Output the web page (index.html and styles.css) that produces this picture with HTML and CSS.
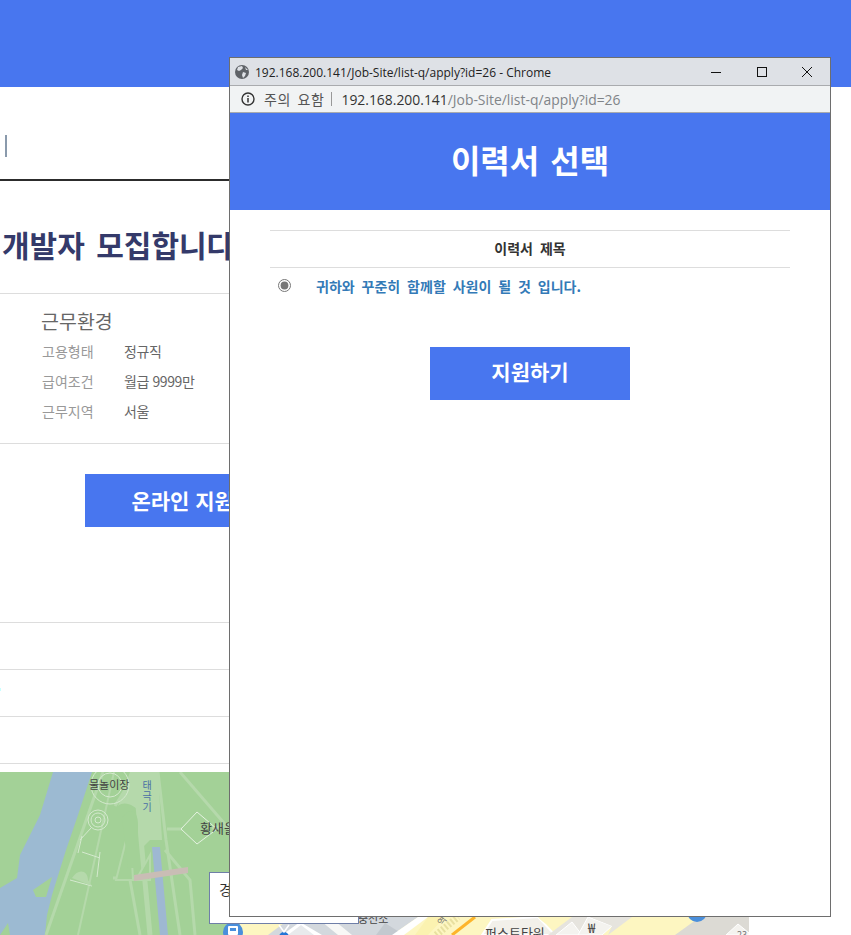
FILE: index.html
```html
<!DOCTYPE html>
<html lang="ko">
<head>
  <meta charset="UTF-8">
  <title>이력서 선택</title>
  <link rel="stylesheet" href="styles.css">
</head>
<body>
  <div class="page">
    <div class="top"></div>
    <div class="content">
      <div class="search"><span class="caret"></span></div>
      <h1 class="job-title">개발자 모집합니다</h1>
      <div class="info">
        <h2 class="info-title">근무환경</h2>
        <dl class="info-list">
          <dt>고용형태</dt><dd>정규직</dd>
          <dt>급여조건</dt><dd>월급 9999만</dd>
          <dt>근무지역</dt><dd>서울</dd>
        </dl>
      </div>
      <div class="apply"><a class="apply-btn">온라인 지원하기</a></div>
      <div class="row"></div>
      <div class="row"><span class="speck"></span></div>
      <div class="row"></div>
      <div class="map">
        <svg width="749" height="163" viewBox="0 772 749 163">
          <rect x="0" y="772" width="240" height="163" fill="#a3d197"/>
          <!-- 강 -->
          <path d="M53 772H92L78 815L66 850L52 895L47 915L45 935H0V888L17 878L20 855L40 815Z" fill="#9cbad2"/>
          <path d="M33 890L52 877L46 897L36 897Z" fill="#a3d197"/>
          <path d="M0 935L8 923L10 935Z" fill="#a3d197"/>
          <!-- 공원 길 -->
          <g fill="none" stroke="#b5d9ab" stroke-width="3">
            <path d="M103 772L46 935"/>
            <path d="M114 772L78 935" stroke-width="2"/>
            <path d="M135 772L142 850L150 935" stroke-width="5"/>
            <path d="M158 772L166 840L180 935" stroke-width="3"/>
            <path d="M180 772L230 830"/>
            <path d="M167 829L182 829M212 828L232 825"/>
            <path d="M115 806L125 790"/>
            <path d="M113 878H150"/>
            <path d="M130 880L140 935"/>
            <path d="M165 850L190 880L195 935"/>
          </g>
          <path d="M116 880L130 825L133 880Z M136 880L150 855V880Z" fill="#a3d197" stroke="#b5d9ab" stroke-width="2"/>
          <path d="M118 806C125 800 135 806 140 812V850L150 840L162 840L158 772H130Z" fill="#b5d9ab"/>
          <path d="M122 818C130 806 138 810 138 825V868H128Z" fill="#a3d197"/>
          <path d="M152 847H160L168 935H160Z" fill="#9eb8d2"/>
          <path d="M134 875L188 867V873L134 881Z" fill="#c9bdb5"/>
          <g fill="none" stroke="#d4e9ce" stroke-width="1">
            <circle cx="98" cy="820" r="10"/>
            <circle cx="98" cy="820" r="7"/>
            <circle cx="98" cy="820" r="3"/>
            <circle cx="110" cy="785" r="12"/>
            <circle cx="110" cy="785" r="19"/>
            <path d="M91 828L80 840M82 836L78 853M70 880L92 886M100 852L97 877M82 852L100 858"/>
            <path d="M197 812L217 829L197 844L181 829Z" stroke="#e5f2e1"/>
          </g>
          <path d="M72 878C78 868 88 870 88 880L92 886Z" fill="#b5d9ab"/>
          <text class="map-label" x="89" y="789">물놀이장</text>
          <text class="map-label map-label-blue" x="147" y="780">태극기</text>
          <text class="map-label map-label-big" x="200" y="833">황새울</text>

          <!-- 팝업 아래로 보이는 지도 -->
          <rect x="240" y="905" width="509" height="30" fill="#fdf6c1"/>
          <path d="M268 935L292 917H418L392 935Z" fill="#d3d8dd"/>
          <path d="M282 935L300 922L322 935Z" fill="#fff"/>
          <path d="M288 935L301 925L314 935Z" fill="#e8eaec"/>
          <path d="M330 917L352 935H338L316 917Z" fill="#f8f8f6"/>
          <path d="M385 923L404 935H376Z" fill="#c3c9cf"/>
          <path d="M392 935L418 917H428L404 935Z" fill="#fff"/>
          <path d="M428 917L415 935H428L445 917Z" fill="#fbf2b0"/>
          <path d="M436 935L458 917" stroke="#e8e0a0" stroke-width="7" stroke-dasharray="2 2" fill="none"/>
          <path d="M452 935L475 917" stroke="#fdb52a" stroke-width="3" fill="none"/>
          <path d="M482 935L492 920L538 917L555 935Z" fill="#f2f0ea" stroke="#fff" stroke-width="2"/>
          <path d="M538 917C545 925 552 927 560 925L566 917Z" fill="#fdf6c1"/>
          <path d="M548 935L572 917H600L612 926L602 935Z" fill="#e6e4de"/>
          <path d="M556 935L572 922L582 935Z" fill="#f4f3ef" stroke="#fff"/>
          <path d="M578 935L588 917L612 926L602 935Z" fill="#f4f3ef" stroke="#fff"/>
          <path d="M608 935L632 917H590L612 926Z" fill="#e6e4de"/>
          <path d="M675 935L700 917H749V935Z" fill="#dcdad4"/>
          <path d="M726 935L738 924L749 933V935Z" fill="#f4f3ef" stroke="#fff"/>
          <circle cx="697" cy="912" r="10" fill="#4a8fdc"/>
          <circle cx="233" cy="932" r="10" fill="#4a8fdc"/>
          <rect x="228" y="926" width="10" height="9" rx="1" fill="#fff"/>
          <rect x="230" y="928" width="6" height="3" fill="#4a8fdc"/>
          <circle cx="284" cy="937" r="5" fill="#2376d6"/>
          <path d="M279 925L284 932L289 925" fill="none" stroke="#fff" stroke-width="1.5"/>
          <text class="map-label" x="358" y="923">충전소</text>
          <text class="map-label map-label-num" x="442" y="926" transform="rotate(-52 442 926)">역</text>
          <text class="map-label map-label-big" x="485" y="938">퍼스트타워</text>
          <text class="map-label map-label-big" x="588" y="933">₩</text>
          <text class="map-label map-label-num" x="737" y="938">23</text>
        </svg>
        <div class="map-box">경</div>
      </div>
    </div>
  </div>

  <div class="popup">
    <div class="popup-bar">
      <svg class="globe" width="14" height="14" viewBox="0 0 14 14">
        <circle cx="7" cy="7" r="7" fill="#5f6368"/>
        <path d="M3 2L7 1L8 3L6 5L4 6L2 5ZM8 7L11 8L10 11L8 13L7 10ZM10 2L13 5L11 5Z" fill="#dee1e6"/>
      </svg>
      <span class="popup-title">192.168.200.141/Job-Site/list-q/apply?id=26 - Chrome</span>
      <div class="win-btns">
        <svg width="12" height="12" viewBox="0 0 12 12"><path d="M0 6.5H10" stroke="#111" fill="none"/></svg>
        <svg width="12" height="12" viewBox="0 0 12 12"><rect x="1.5" y="1.5" width="9" height="9" stroke="#111" fill="none"/></svg>
        <svg width="12" height="12" viewBox="0 0 12 12"><path d="M1 1L11 11M11 1L1 11" stroke="#111" fill="none"/></svg>
      </div>
    </div>
    <div class="popup-addr">
      <svg width="14" height="14" viewBox="0 0 14 14">
        <circle cx="7" cy="7" r="6" stroke="#333" stroke-width="1.4" fill="none"/>
        <path d="M7 6V10.6M7 3.4V5" stroke="#333" stroke-width="1.5"/>
      </svg>
      <span class="addr-warn">주의 요함</span>
      <span class="addr-sep"></span>
      <span class="addr-url"><b>192.168.200.141</b>/Job-Site/list-q/apply?id=26</span>
    </div>
    <div class="popup-head">이력서 선택</div>
    <div class="popup-body">
      <div class="resume-head">이력서 제목</div>
      <label class="resume-row">
        <input type="radio" class="resume-radio" checked>
        <a class="resume-link">귀하와 꾸준히 함께할 사원이 될 것 입니다.</a>
      </label>
      <a class="submit-btn">지원하기</a>
    </div>
  </div>
</body>
</html>
```
FILE: styles.css
```css
* {
  margin: 0;
  padding: 0;
  box-sizing: border-box;
}
html, body {
  height: 100%;
  overflow: hidden;
  background: #fff;
}
body {
  font-family: "Noto Sans CJK KR", "Noto Sans", sans-serif;
  position: relative;
}
.page {
  width: 851px;
  height: 935px;
  overflow: hidden;
}
.top {
  height: 87px;
  background: #4876ef;
}
.content {
  width: 749px;
}
.search {
  height: 94px;
  border-bottom: 2px solid #2c2c2c;
  padding: 48px 0 0 5px;
}
.caret {
  display: block;
  width: 2px;
  height: 22px;
  background: #8a9aac;
}
.job-title {
  height: 112px;
  padding: 43px 0 0 2px;
  font-size: 30px;
  line-height: 40px;
  font-weight: 700;
  word-spacing: 3px;
  color: #343a6a;
  white-space: nowrap;
}
.info {
  height: 151px;
  border-top: 1px solid #ddd;
  border-bottom: 1px solid #ddd;
  padding: 12px 0 0 41px;
}
.info-title {
  font-size: 19.5px;
  line-height: 30px;
  font-weight: 400;
  color: #666;
}
.info-list {
  display: grid;
  grid-template-columns: 83px auto;
  grid-auto-rows: 30px;
  margin-top: 0;
  font-size: 14px;
  line-height: 30px;
}
.info-list dt {
  color: #999;
  padding-left: 1px;
}
.info-list dd {
  color: #666;
  letter-spacing: -0.4px;
}
.apply {
  height: 178px;
  padding: 30px 0 0 85px;
}
.apply-btn {
  display: block;
  width: 234px;
  height: 53px;
  background: #4876ef;
  color: #fff;
  font-size: 21px;
  font-weight: 700;
  line-height: 52px;
  text-align: center;
  white-space: nowrap;
}
.row {
  height: 47px;
  border-top: 1px solid #ddd;
}
.row + .row + .row {
  height: 48px;
  border-bottom: 1px solid #ddd;
}
.speck {
  display: block;
  width: 1px;
  height: 3px;
  margin-top: 18px;
  background: #c9ffff;
}
.map {
  height: 163px;
  margin-top: 8px;
  position: relative;
}
.map svg {
  display: block;
}
.map-label {
  font-size: 11px;
  fill: #444;
}
.map-label-blue {
  fill: #4a6fa5;
  font-size: 10px;
  letter-spacing: 1px;
  writing-mode: vertical-rl;
}
.map-label-big {
  font-size: 13px;
}
.map-label-num {
  font-size: 9px;
  fill: #777;
}
.map-box {
  position: absolute;
  left: 209px;
  top: 100px;
  width: 150px;
  height: 52px;
  background: #fff;
  border: 1px solid #6f7fa8;
  padding: 6px 9px;
  font-size: 14px;
  color: #333;
}
/* 팝업 창 */
.popup {
  position: absolute;
  left: 229px;
  top: 57px;
  width: 602px;
  height: 860px;
  border: 1px solid #6e6e6e;
  background: #fff;
  display: flex;
  flex-direction: column;
}
.popup-bar {
  height: 28px;
  flex: none;
  display: flex;
  align-items: center;
  padding-left: 5px;
  background: #dee1e6;
  border-bottom: 1px solid #a9abae;
}
.globe {
  flex: none;
}
.popup-title {
  margin-left: 6px;
  padding-top: 1px;
  font-family: "Open Sans", sans-serif;
  font-size: 12px;
  color: #222;
  white-space: nowrap;
}
.win-btns {
  margin-left: auto;
  display: flex;
  gap: 33px;
  padding-right: 17px;
}
.popup-addr {
  height: 27px;
  flex: none;
  display: flex;
  align-items: center;
  padding-left: 11px;
  background: #f1f3f4;
  border-bottom: 1px solid #a9abae;
  font-family: "Open Sans", sans-serif;
  font-size: 13.9px;
  color: #808488;
}
.addr-warn {
  margin-left: 9px;
  font-family: "Noto Sans CJK KR", sans-serif;
  font-size: 14px;
  letter-spacing: 0.6px;
  word-spacing: 2px;
  color: #555;
}
.addr-sep {
  width: 1px;
  height: 14px;
  margin: 0 9px 0 7px;
  background: #999;
}
.addr-url b {
  font-weight: 400;
  color: #333;
}
.popup-head {
  height: 97px;
  flex: none;
  background: #4876ef;
  color: #fff;
  font-size: 32px;
  font-weight: 700;
  word-spacing: 2px;
  line-height: 92px;
  text-align: center;
}
.popup-body {
  padding: 20px 40px 0;
  font-size: 14px;
}
.resume-head {
  height: 38px;
  border-top: 1px solid #ddd;
  border-bottom: 1px solid #ddd;
  color: #333;
  font-weight: 700;
  word-spacing: 3px;
  line-height: 35px;
  text-align: center;
}
.resume-row {
  height: 37px;
  display: flex;
  align-items: center;
  gap: 25px;
  padding: 0 0 2px 8px;
}
.resume-radio {
  display: block;
  width: 13px;
  height: 13px;
  accent-color: #777;
}
.resume-link {
  color: #337ab7;
  font-weight: 700;
  word-spacing: 3px;
}
.submit-btn {
  display: block;
  width: 200px;
  height: 53px;
  margin: 42px auto 0;
  background: #4876ef;
  color: #fff;
  font-size: 21px;
  font-weight: 700;
  line-height: 49px;
  text-align: center;
}
```
